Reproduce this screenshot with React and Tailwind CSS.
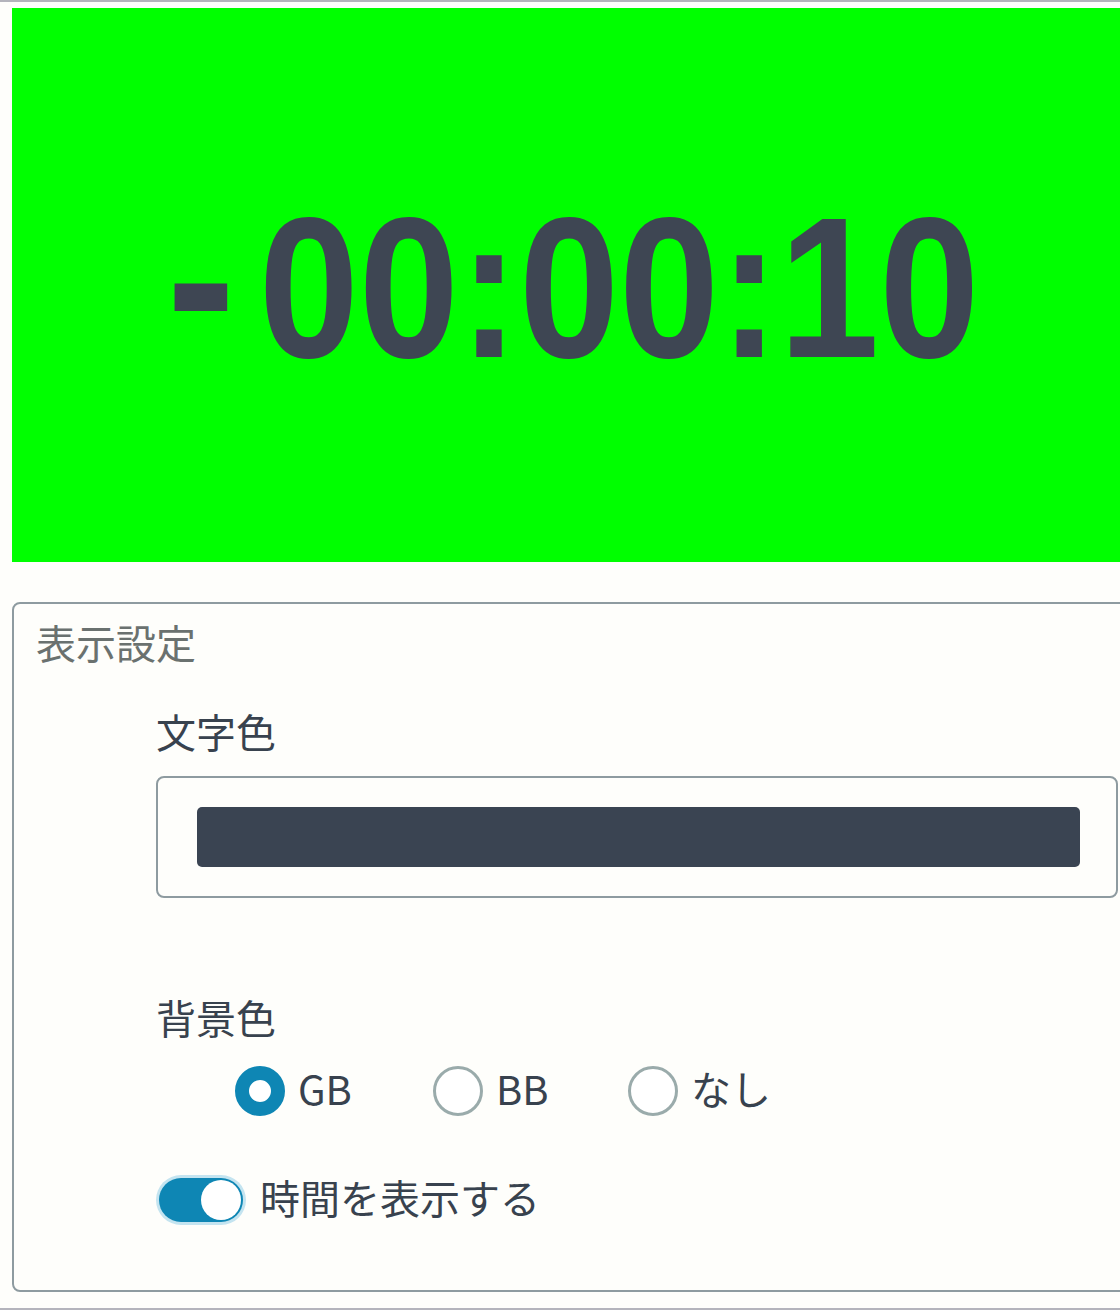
import { useState } from 'react';

const font = { fontFamily: '"Noto Sans CJK JP", "Noto Sans", sans-serif' };

function Radio({ checked, label, onClick, className }) {
    return (
        <label className={`flex cursor-pointer ${className}`} onClick={onClick}>
            <span
                className={
                    checked
                        ? 'w-[50px] h-[50px] rounded-full border-[14px] border-[#0e86b4] bg-white'
                        : 'w-[50px] h-[50px] rounded-full border-[3px] border-[#9aabab] bg-white'
                }
            />
            <span className="ml-[13px] text-[40px] leading-[44px] text-[#38424e]">{label}</span>
        </label>
    );
}

export default function App() {
    const [bg, setBg] = useState('GB');
    const [showTime, setShowTime] = useState(true);

    return (
        <div className="w-[1120px] h-[1310px] overflow-hidden bg-[#fefefb] border-t-2 border-b-2 border-[#b4b4bc]" style={font}>
            <div className="ml-[12px] mt-[6px] w-[1126px]">
                <div className="h-[554px] bg-[#00ff00] flex items-center justify-center">
                    {showTime && (
                        <div className="font-['Liberation_Sans'] font-bold text-[200px] leading-none text-[#3e4653] tabular-nums scale-x-[0.9] translate-y-[3px] flex items-center">
                            <span className="mr-[31px] -translate-y-[10px] scale-[1.15]">-</span>
                            <span>00:00:10</span>
                        </div>
                    )}
                </div>

                <div className="mt-[40px] h-[690px] border-2 border-[#8e9ba0] rounded-lg">
                    <div className="pl-[22px] pt-[8px] text-[40px] leading-[60px] text-[#6a716f]">表示設定</div>

                    <div className="pl-[142px] pr-[18px]">
                        <div className="mt-[29px] text-[40px] leading-[60px] text-[#38424e]">文字色</div>
                        <div className="mt-[15px] h-[122px] border-2 border-[#8e9ba0] rounded-lg pl-[39px] pr-[36px] pt-[29px]">
                            <div className="h-[60px] rounded-[5px] bg-[#3a4452]" />
                        </div>

                        <div className="mt-[89px] text-[40px] leading-[60px] text-[#38424e]">背景色</div>
                        <div className="mt-[19px] pl-[79px] flex">
                            <Radio className="w-[198px]" label="GB" checked={bg === 'GB'} onClick={() => setBg('GB')} />
                            <Radio className="w-[195px]" label="BB" checked={bg === 'BB'} onClick={() => setBg('BB')} />
                            <Radio label="なし" checked={bg === 'none'} onClick={() => setBg('none')} />
                        </div>

                        <div className="mt-[59px] flex h-[50px]">
                            <button
                                onClick={() => setShowTime(!showTime)}
                                className={`mt-[3px] ml-[3px] w-[84px] h-[44px] rounded-full p-[2px] flex ring-[3px] ring-[#c4e4f0] ${showTime ? 'bg-[#0e86b4] justify-end' : 'bg-[#9aabab] justify-start'}`}
                            >
                                <span className="w-[40px] h-[40px] rounded-full bg-white" />
                            </button>
                            <span className="ml-[17px] text-[40px] leading-[44px] text-[#38424e]">時間を表示する</span>
                        </div>
                    </div>
                </div>
            </div>
        </div>
    );
}
